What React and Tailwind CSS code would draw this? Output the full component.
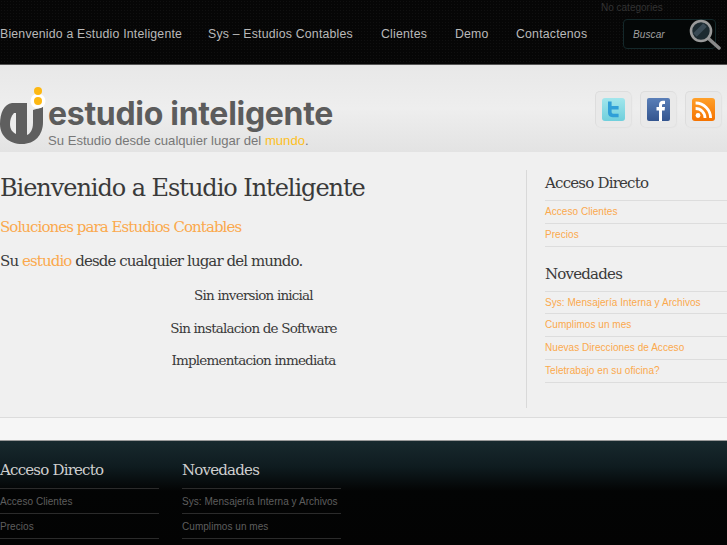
import React from "react";

const slab = { fontFamily: '"DejaVu Serif", "Liberation Serif", serif' };
const sans = "font-['Liberation_Sans',Arial,sans-serif]";

const navItems = [
  ["Bienvenido a Estudio Inteligente", "w-[208px]"],
  ["Sys – Estudios Contables", "w-[173px]"],
  ["Clientes", "w-[74px]"],
  ["Demo", "w-[61px]"],
  ["Contactenos", "w-[90px]"],
];

function LogoMark() {
  return (
    <svg width="48" height="62" viewBox="0 0 48 62" className="shrink-0">
      <path
        d="M12 18C4 19 0 28 0 39C0 51 9 59 22 59C35 59 43 50 43 37V22L33 25V38C33 45 30 49 27 50V18Z"
        fill="#5f5f5f"
      />
      <path d="M14 28C11 31 10 35 10 39C10 44 12 47 16 49V28Z" fill="#ededed" />
      <circle cx="38" cy="16" r="7.5" fill="#ffffff" />
      <circle cx="38" cy="16" r="4" fill="#fdb813" />
      <circle cx="38" cy="6" r="4" fill="#fdb813" />
    </svg>
  );
}

function Tile({ children }) {
  return (
    <div className="w-[36px] h-[36px] rounded-[5px] bg-[#e9e9e9] border-l border-t border-[#dddddd] shadow-[1px_1px_1px_#e2e2e2] flex items-center justify-center">
      {children}
    </div>
  );
}

function SearchGlass() {
  return (
    <svg width="34" height="34" viewBox="0 0 34 34" className="absolute left-[687px] top-[17px]">
      <line x1="22" y1="22" x2="32" y2="31" stroke="#8a8a8a" strokeWidth="3.5" strokeLinecap="round" />
      <circle cx="14" cy="14" r="10" fill="#1c2a30" stroke="#9a9a9a" strokeWidth="2.6" />
      <path d="M8 18L18 8" stroke="#3a4a55" strokeWidth="5" />
    </svg>
  );
}

function SideList({ title, items, className }) {
  return (
    <div className={className}>
      <h3 style={slab} className="text-[#3a3a3a] text-[15px] leading-[20px] h-[30px] pt-[3px] tracking-[-0.8px]">
        {title}
      </h3>
      <ul className="border-t border-[#dddddd]">
        {items.map((t) => (
          <li key={t} className={`${sans} h-[22.75px] border-b border-[#dddddd] text-[10px] leading-[21.5px] tracking-[0.05px] text-[#fba94d] whitespace-nowrap`}>
            {t}
          </li>
        ))}
      </ul>
    </div>
  );
}

function FootList({ title, items, className }) {
  return (
    <div className={`w-[159px] ${className}`}>
      <h3 style={slab} className="text-[#cfcfcf] text-[15px] leading-[18px] h-[27px] tracking-[-0.8px]">
        {title}
      </h3>
      <ul className="border-t border-[#2b2b2b]">
        {items.map((t) => (
          <li key={t} className={`${sans} h-[25px] border-b border-[#2b2b2b] text-[10px] leading-[26px] tracking-[0.05px] text-[#5e5e5e] whitespace-nowrap`}>
            {t}
          </li>
        ))}
      </ul>
    </div>
  );
}

export default function App() {
  return (
    <div className={`relative w-[727px] h-[545px] overflow-hidden bg-[#f0f0f0] ${sans}`}>
      {/* top nav */}
      <nav className="h-[65px] bg-[#060606] bg-[radial-gradient(#101010_1px,transparent_1px)] bg-[length:3px_3px] border-b border-[#555555] flex items-center pt-[3px]">
        {navItems.map(([t, w]) => (
          <span key={t} className={`${w} shrink-0 text-[12.3px] leading-[18px] tracking-[0.2px] text-[#b9b9b9] whitespace-nowrap`}>
            {t}
          </span>
        ))}
      </nav>
      <span className="absolute left-[601px] top-[1px] text-[10px] leading-[13px] text-[#333333]">No categories</span>
      <div className="absolute left-[623px] top-[19px] w-[93px] h-[30px] rounded-[4px] border border-[#14282a] bg-[#040707] flex items-center pl-[9px]">
        <span className="text-[10px] italic tracking-[0.1px] text-[#a0a0a0]">Buscar</span>
      </div>
      <SearchGlass />

      {/* logo band */}
      <header className="h-[87px] bg-gradient-to-b from-[#e8e8e8] via-[#eeeeee] to-[#e3e3e3] flex items-start justify-between">
        <div className="flex items-start pt-[22px] relative">
          <div className="absolute left-0 top-[20px]"><LogoMark /></div>
          <div className="ml-[48px] mt-[8px]">
            <div className="font-['Inter',sans-serif] font-bold text-[#5c5c5c] text-[32px] leading-[38px] tracking-[-0.3px] whitespace-nowrap">
              estudio inteligente
            </div>
            <div className="text-[13.1px] leading-[16px] text-[#777777] whitespace-nowrap">
              Su Estudio desde cualquier lugar del <span className="text-[#fdc01e]">mundo</span>.
            </div>
          </div>
        </div>
        <div className="flex gap-[9px] pt-[26px] pr-[6px]">
          <Tile>
            <svg width="23" height="23" viewBox="0 0 23 23">
              <defs>
                <linearGradient id="tw" x1="0" y1="0" x2="0" y2="1">
                  <stop offset="0" stopColor="#a2e6ec" />
                  <stop offset="1" stopColor="#6fcfdc" />
                </linearGradient>
              </defs>
              <rect width="23" height="23" rx="3" fill="url(#tw)" />
              <path d="M6 3.5h3.6v4.5h7v3.4h-7v2.4c0 1.4.8 2 2.2 2h4.8v3.4h-6c-3 0-4.6-1.6-4.6-4.4z" fill="#2f9fd8" />
            </svg>
          </Tile>
          <Tile>
            <svg width="23" height="23" viewBox="0 0 23 23">
              <defs>
                <linearGradient id="fb" x1="0" y1="0" x2="0" y2="1">
                  <stop offset="0" stopColor="#5a7fb8" />
                  <stop offset="1" stopColor="#33558f" />
                </linearGradient>
              </defs>
              <rect width="23" height="23" rx="2" fill="url(#fb)" />
              <path d="M12 23V12.5H9.5V9h2.5V6.8C12 4 13.6 2.8 16 2.8c1 0 1.8.1 2 .1v3h-1.5c-1.2 0-1.5.6-1.5 1.5V9h3l-.4 3.5H15V23z" fill="#ffffff" />
            </svg>
          </Tile>
          <Tile>
            <svg width="23" height="23" viewBox="0 0 23 23">
              <defs>
                <linearGradient id="rs" x1="0" y1="0" x2="0" y2="1">
                  <stop offset="0" stopColor="#ffa02a" />
                  <stop offset="1" stopColor="#f57300" />
                </linearGradient>
              </defs>
              <rect width="23" height="23" rx="3" fill="url(#rs)" />
              <circle cx="6" cy="17.5" r="2.4" fill="#ffffff" />
              <path d="M3.6 10.5a9.4 9.4 0 0 1 9.4 9.4" stroke="#ffffff" strokeWidth="2.8" fill="none" />
              <path d="M3.6 5a15 15 0 0 1 15 15" stroke="#ffffff" strokeWidth="2.8" fill="none" />
            </svg>
          </Tile>
        </div>
      </header>

      {/* main */}
      <main className="h-[265px] flex">
        <section className="w-[526px] shrink-0 pt-[20px]">
          <h1 style={slab} className="text-[#3a3a3a] text-[24px] leading-[32px] tracking-[-1.05px] whitespace-nowrap">
            Bienvenido a Estudio Inteligente
          </h1>
          <h2 style={slab} className="mt-[12px] text-[#fba94d] text-[15px] leading-[22px] tracking-[-0.93px] whitespace-nowrap">
            Soluciones para Estudios Contables
          </h2>
          <p style={slab} className="mt-[12px] text-[#3a3a3a] text-[15px] leading-[22px] tracking-[-0.9px] whitespace-nowrap">
            Su <span className="text-[#fba94d]">estudio</span> desde cualquier lugar del mundo.
          </p>
          <div style={slab} className="mt-[12px] w-[507px] flex flex-col items-center text-[#3a3a3a] text-[13.5px] leading-[22px] tracking-[-0.8px] gap-[10.5px]">
            <p>Sin inversion inicial</p>
            <p>Sin instalacion de Software</p>
            <p>Implementacion inmediata</p>
          </div>
        </section>
        <aside className="flex-1 mt-[18px] mb-[9px] border-l border-[#d9d9d9] pl-[18px]">
          <SideList title="Acceso Directo" items={["Acceso Clientes", "Precios"]} />
          <SideList
            className="mt-[14px]"
            title="Novedades"
            items={["Sys: Mensajería Interna y Archivos", "Cumplimos un mes", "Nuevas Direcciones de Acceso", "Teletrabajo en su oficina?"]}
          />
        </aside>
      </main>

      {/* strip */}
      <div className="h-[23px] border-t border-[#dcdcdc] bg-[#f6f6f6]" />

      {/* footer */}
      <footer className="h-[105px] border-t border-[#9a9a9a] bg-[linear-gradient(to_bottom,#18292e_0px,#0f1c20_25px,#030404_50px,#030303_100%)] flex pt-[20px] gap-[23px]">
        <FootList title="Acceso Directo" items={["Acceso Clientes", "Precios"]} />
        <FootList title="Novedades" items={["Sys: Mensajería Interna y Archivos", "Cumplimos un mes"]} />
      </footer>
    </div>
  );
}
